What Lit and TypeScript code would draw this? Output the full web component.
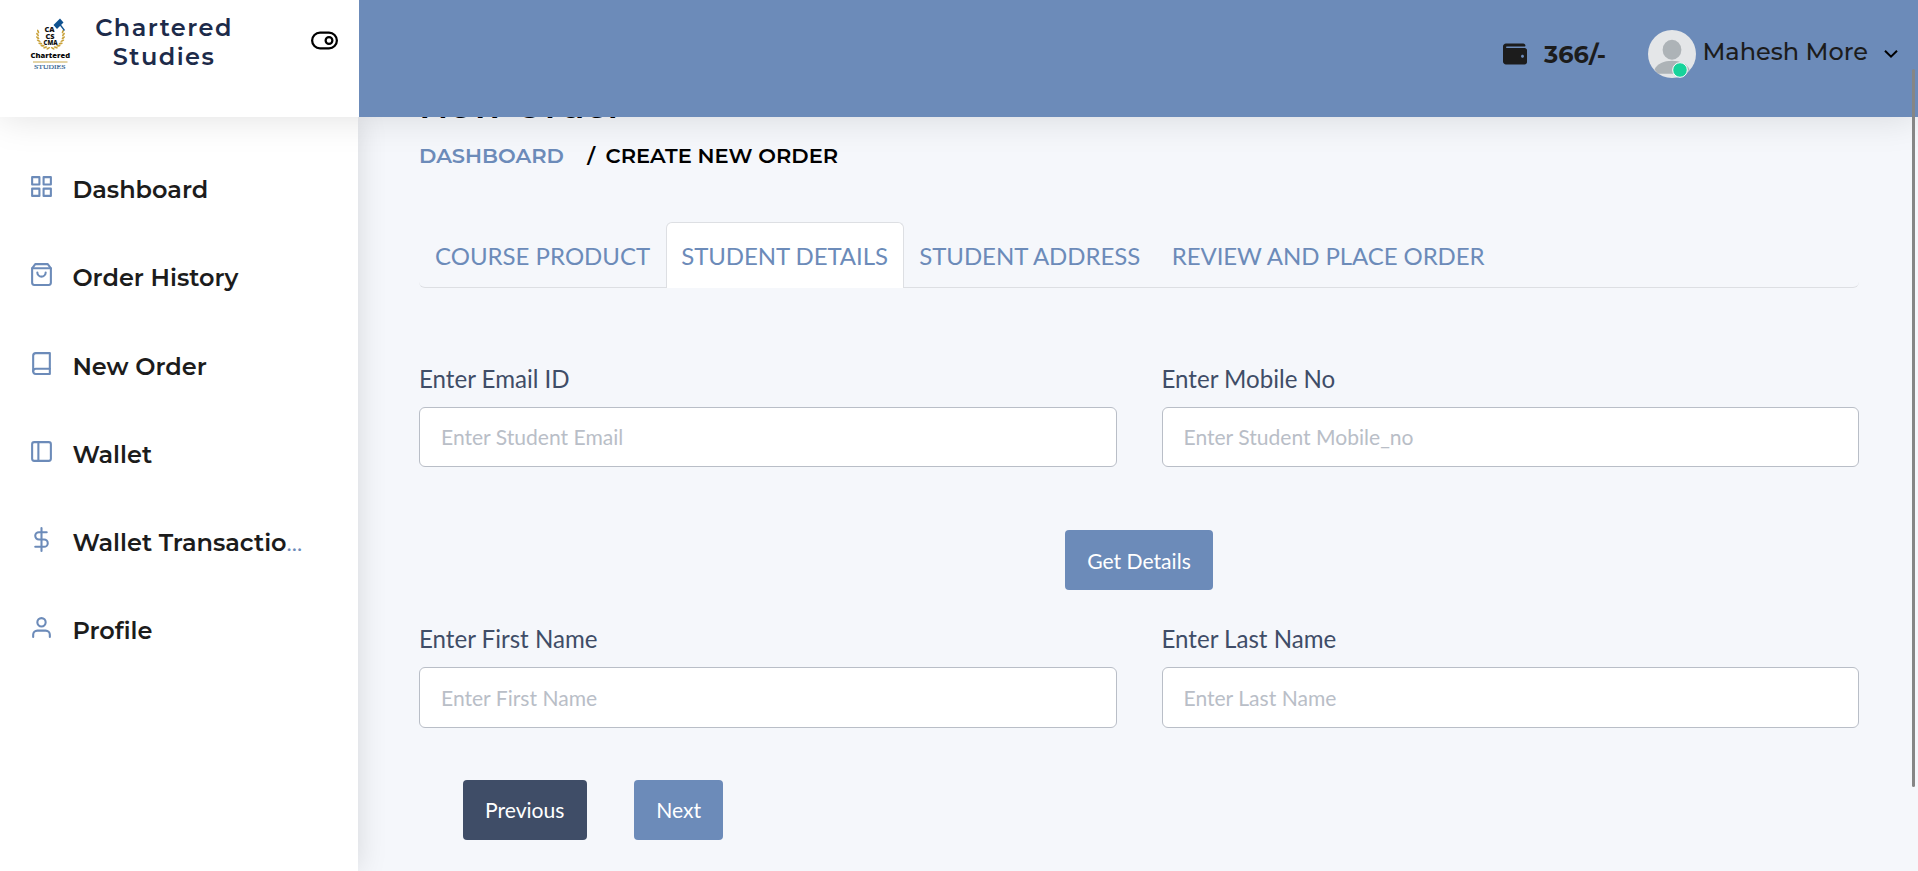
import { LitElement, html, css, svg } from "lit";
import { customElement } from "lit/decorators.js";

const ICONS: Record<string, unknown> = {
  grid: svg`<rect x="3" y="3" width="7" height="7"/><rect x="14" y="3" width="7" height="7"/><rect x="14" y="14" width="7" height="7"/><rect x="3" y="14" width="7" height="7"/>`,
  bag: svg`<path d="M6 2L3 6v14a2 2 0 0 0 2 2h14a2 2 0 0 0 2-2V6l-3-4z"/><path d="M3 6h18"/><path d="M16 10a4 4 0 0 1-8 0"/>`,
  book: svg`<path d="M4 19.5A2.5 2.5 0 0 1 6.5 17H20"/><path d="M6.5 2H20v20H6.5A2.5 2.5 0 0 1 4 19.5v-15A2.5 2.5 0 0 1 6.5 2z"/>`,
  sidebar: svg`<rect x="3" y="3" width="18" height="18" rx="2"/><path d="M9 3v18"/>`,
  dollar: svg`<path d="M12 1v22"/><path d="M17 5H9.5a3.5 3.5 0 0 0 0 7h5a3.5 3.5 0 0 1 0 7H6"/>`,
  user: svg`<path d="M20 21v-2a4 4 0 0 0-4-4H8a4 4 0 0 0-4 4v2"/><circle cx="12" cy="7" r="4"/>`,
};

const NAV = [
  { icon: "grid", label: "Dashboard" },
  { icon: "bag", label: "Order History" },
  { icon: "book", label: "New Order" },
  { icon: "sidebar", label: "Wallet" },
  { icon: "dollar", label: "Wallet Transactio", cut: true },
  { icon: "user", label: "Profile" },
];

const TABS = ["COURSE PRODUCT", "STUDENT DETAILS", "STUDENT ADDRESS", "REVIEW AND PLACE ORDER"];

// Laurel leaves: pairs placed along a half circle on each side of the emblem.
const LEAVES = [-18, -4, 10, 24, 38, 52, 66, 80].map((a) => {
  const t = (a * Math.PI) / 180;
  return { x: Math.cos(t) * 13, y: Math.sin(t) * 13, a };
});

@customElement("app-root")
export class AppRoot extends LitElement {
  static styles = css`
    :host { display: block; height: 871px; overflow: hidden; font-family: Lato, sans-serif; background: #f5f7fb; }
    * { box-sizing: border-box; }
    .m { font-family: Montserrat, Inter, sans-serif; }
    .page { position: relative; display: grid; grid-template-columns: 358px 1fr; grid-template-rows: 117px 754px; }
    .brand { z-index: 3; background: #fff; display: flex; align-items: flex-start; padding-left: 22px; margin-right: -1px; }
    .logo { flex: none; margin-top: 10px; }
    .l-mark { font: 800 7px "Open Sans", sans-serif; fill: #111; }
    .l-small { font-size: 6px; }
    .l-name { font: 800 7.6px "Open Sans", sans-serif; fill: #0a0a0a; }
    .l-sub { font: 7px "Liberation Serif", serif; fill: #2c5c8e; stroke: #2c5c8e; stroke-width: .15; }
    .name { flex: none; width: 150px; margin: 14px 0 0 7px; text-align: center; font-size: 24px; font-weight: 600; line-height: 28.8px; letter-spacing: 1.45px; color: #1d2b4a; }
    .toggle { flex: none; margin: 27px 0 0 72px; }
    .top { z-index: 3; background: #6c8bb9; margin-left: 1px; display: flex; align-items: flex-start; justify-content: flex-end; }
    .shade { position: absolute; z-index: 2; left: 0; right: 0; top: 0; height: 117px; box-shadow: 0 0 36px rgba(0,0,0,.13); pointer-events: none; }
    .side { z-index: 1; background: #fff; padding-top: 28.1px; box-shadow: 0 0 28px rgba(0,0,0,.13); }
    .item { height: 88.25px; display: flex; align-items: flex-start; padding: 29px 0 0 29px; }
    .item svg { flex: none; }
    .item span { display: flex; margin-left: 18.4px; font-size: 24px; font-weight: 600; line-height: 32px; color: #1c1c1c; white-space: nowrap; }
    .item .cut { margin: 0; font-size: 22px; font-family: Lato, sans-serif; color: #6c8bb9; font-weight: 400; }
    .money { font-size: 24px; font-weight: 700; color: #1c1c1c; line-height: 30px; margin: 40px 42.5px 0 16.5px; }
    .wallet { margin-top: 41.8px; }
    .avatar { margin-top: 30px; }
    .user { font-size: 24px; font-weight: 500; color: #1c1c1c; line-height: 30px; margin: 37px 16px 0 6px; white-space: nowrap; }
    .chev { margin: 49px 20px 0 0; }
    .main { padding: 0 59px 0 61px; overflow: hidden; }
    h1 { margin: -32px 0 0; height: 40px; line-height: 40px; font-size: 36.4px; font-weight: 600; color: #000; }
    .crumbs { display: flex; margin-top: 16px; height: 30px; line-height: 30px; font-size: 21px; font-weight: 600; color: #000; }
    .crumbs a { color: #6c8bb9; }
    .crumbs i { font-style: normal; margin: 0 10.5px 0 23.3px; }
    .tabs { display: flex; margin-top: 51px; height: 66px; border-bottom: 1px solid #dddfe3; border-radius: 6px; }
    .tab { height: 66px; padding: 0 15px; border: 1px solid transparent; border-bottom: 0; line-height: 65px; font-size: 24px; color: #6c8bb9; white-space: nowrap; }
    .tab:nth-child(2) { letter-spacing: -.08px; padding: 0 14.9px 0 14px; }
    .tab:nth-child(3) { letter-spacing: -.05px; padding: 0 14.5px; }
    .tab:nth-child(4) { letter-spacing: -.08px; }
    .tab.on { background: #fff; border-color: #dddfe3; border-radius: 6px 6px 0 0; }
    .row { display: grid; grid-template-columns: 1fr 1fr; column-gap: 45px; }
    .r1 { margin-top: 75px; }
    .r2 { margin-top: 33px; }
    label { display: block; height: 44px; line-height: 32px; font-size: 24.1px; color: #3f4d67; }
    input { display: block; width: 100%; height: 60px; border: 1px solid #b9bec7; border-radius: 6px; background: #fff; padding: 0 21px 2px; font: 21.08px Lato, sans-serif; color: #3f4d67; }
    .r2 input { height: 61px; padding-bottom: 0; }
    input::placeholder { color: #b9bec7; opacity: 1; }
    button { font: 21.12px Lato, sans-serif; color: #fff; border: 0; border-radius: 4px; height: 60px; background: #6c8bb9; padding: 0 22px; }
    .get { display: block; margin: 63px auto 0; }
    .acts { display: flex; gap: 47px; margin: 52px 0 0 44px; }
    .acts button { padding: 0 22px 2px; }
    .acts .prev { background: #3f4d67; padding-right: 22.8px; }
    .bar { position: absolute; z-index: 5; left: 1912px; top: 69px; width: 3px; height: 718px; background: #868686; border-radius: 2px; }
  `;

  field(label: string, ph: string) {
    return html`<div><label>${label}</label><input placeholder=${ph} /></div>`;
  }

  logo() {
    return html`<svg class="logo" width="60" height="64" viewBox="0 0 60 64">
      <g fill="#c9a23a">
        ${LEAVES.map((l) => svg`
          <ellipse rx="2.1" ry=".9" transform="translate(${28.5 + l.x} ${25.5 + l.y}) rotate(${l.a - 50})"/>
          <ellipse rx="2.1" ry=".9" transform="translate(${28.5 - l.x} ${25.5 + l.y}) rotate(${50 - l.a})"/>`)}
      </g>
      <path d="M31.500 15l6.500-6.500 3.500 4-6.500 6.500z" fill="#0f5290"/>
      <path d="M38 14.500l4.500 6" stroke="#0f5290" stroke-width="1.300"/>
      <text class="l-mark" x="22.600" y="21.800" textLength="10" lengthAdjust="spacingAndGlyphs">CA</text>
      <text class="l-mark" x="23.500" y="28.500" textLength="9" lengthAdjust="spacingAndGlyphs">CS</text>
      <text class="l-mark l-small" x="21.500" y="34.500" textLength="14" lengthAdjust="spacingAndGlyphs">CMA</text>
      <text class="l-name" x="8.600" y="47.800" textLength="39.500" lengthAdjust="spacingAndGlyphs">Chartered</text>
      <path d="M11 52h34.500" stroke="#c9a94f" stroke-width="1.100"/>
      <text class="l-sub" x="12" y="58.800" textLength="31.500" lengthAdjust="spacingAndGlyphs">STUDIES</text>
    </svg>`;
  }

  render() {
    return html`<div class="page">
      <div class="brand">
        ${this.logo()}
        <div class="name m">Chartered<br />Studies</div>
        <svg class="toggle" width="27" height="27" viewBox="0 0 24 24" fill="none" stroke="#000" stroke-width="2"><rect x="1" y="5" width="22" height="14" rx="7"/><circle cx="16" cy="12" r="3"/></svg>
      </div>
      <div class="top">
        <svg class="wallet" width="24" height="24" viewBox="0 0 512 512" fill="#1c1c1c"><path d="M461.2 128H80c-8.840 0-16-7.160-16-16s7.160-16 16-16h384c8.840 0 16-7.160 16-16 0-26.510-21.490-48-48-48H64C28.650 32 0 60.650 0 96v320c0 35.350 28.650 64 64 64h397.200c28.020 0 50.800-21.530 50.800-48V176c0-26.470-22.780-48-50.800-48zM416 336c-17.670 0-32-14.330-32-32s14.330-32 32-32 32 14.330 32 32-14.330 32-32 32z"/></svg>
        <div class="money m">366/-</div>
        <svg class="avatar" width="48" height="48" viewBox="0 0 48 48">
          <circle cx="24" cy="24" r="24" fill="#e4e6e8"/>
          <ellipse cx="24" cy="19.700" rx="9.400" ry="10" fill="#adb3b7"/>
          <path d="M6.500 39.500C9 34 16 30.700 24 30.700S39 34 41.500 39.500L38 43.700H10z" fill="#adb3b7"/>
          <circle cx="32" cy="40" r="7.300" fill="#17d39b" stroke="#fff"/>
        </svg>
        <div class="user m">Mahesh More</div>
        <svg class="chev" width="14" height="10" viewBox="0 0 14 10" fill="none" stroke="#000" stroke-width="2"><path d="M1 1.700l6 6 6-6"/></svg>
      </div>
      <div class="shade"></div>
      <div class="side">
        ${NAV.map((n) => html`<div class="item">
          <svg width="25" height="25" viewBox="0 0 24 24" fill="none" stroke="#6c8bb9" stroke-width="2" stroke-linecap="round" stroke-linejoin="round">${ICONS[n.icon]}</svg>
          <span class="m">${n.label}${n.cut ? html`<span class="cut">...</span>` : ""}</span>
        </div>`)}
      </div>
      <div class="main">
        <h1 class="m">New Order</h1>
        <div class="crumbs m"><a>DASHBOARD</a><i>/</i><span>CREATE NEW ORDER</span></div>
        <div class="tabs">${TABS.map((t, i) => html`<div class="tab ${i === 1 ? "on" : ""}">${t}</div>`)}</div>
        <div class="row r1">${this.field("Enter Email ID", "Enter Student Email")}${this.field("Enter Mobile No", "Enter Student Mobile_no")}</div>
        <button class="get">Get Details</button>
        <div class="row r2">${this.field("Enter First Name", "Enter First Name")}${this.field("Enter Last Name", "Enter Last Name")}</div>
        <div class="acts"><button class="prev">Previous</button><button>Next</button></div>
      </div>
      <div class="bar"></div>
    </div>`;
  }
}
